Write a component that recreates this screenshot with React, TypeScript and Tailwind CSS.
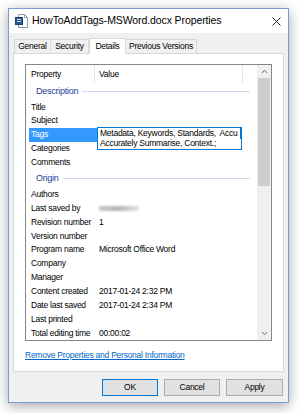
import { ChevronUp, ChevronDown } from 'lucide-react';

type Row = { label: string; value?: string; kind?: 'blur' | 'tags' };

const descriptionRows: Row[] = [
  { label: 'Title' },
  { label: 'Subject' },
  { label: 'Tags', kind: 'tags' },
  { label: 'Categories' },
  { label: 'Comments' },
];

const originRows: Row[] = [
  { label: 'Authors' },
  { label: 'Last saved by', kind: 'blur' },
  { label: 'Revision number', value: '1' },
  { label: 'Version number' },
  { label: 'Program name', value: 'Microsoft Office Word' },
  { label: 'Company' },
  { label: 'Manager' },
  { label: 'Content created', value: '2017-01-24 2:32 PM' },
  { label: 'Date last saved', value: '2017-01-24 2:34 PM' },
  { label: 'Last printed' },
  { label: 'Total editing time', value: '00:00:02' },
];

function DocIcon() {
  return (
    <svg width="13" height="14" viewBox="0 0 13 14">
      <path d="M3.5 0.5h6l3 3v10h-9z" fill="#ffffff" stroke="#8a9bb0" />
      <path d="M9.5 0.5v3h3" fill="none" stroke="#8a9bb0" />
      <rect x="0.5" y="3.5" width="7" height="7" fill="#2b5797" stroke="#1d3f72" />
      <rect x="2" y="5" width="4" height="1" fill="#c7d6ec" />
      <rect x="2" y="7" width="4" height="1" fill="#c7d6ec" />
    </svg>
  );
}

function GroupHeading({ title, h }: { title: string; h: string }) {
  return (
    <div className={`flex items-center ${h} pl-[10px] pr-[7px]`}>
      <span className="text-[#1c3f94] text-[9px] leading-none">{title}</span>
      <div className="flex-1 h-px bg-[#c8d8ef] ml-[4px]" />
    </div>
  );
}

function PropRow({ row }: { row: Row }) {
  const selected = row.kind === 'tags';
  return (
    <div className="relative flex items-center h-[13.9px] whitespace-nowrap">
      {selected ? (
        <div className="w-[71px] h-full flex items-center">
          <div className="ml-[3px] w-[68px] h-full bg-[#3399ff] text-white flex items-center pl-[2px]">{row.label}</div>
        </div>
      ) : (
        <div className="w-[71px] h-full flex items-center pl-[5px]">{row.label}</div>
      )}
      <div className="flex-1 pl-[2px]">
        {row.value}
        {row.kind === 'blur' && (
          <div className="w-[40px] h-[5px] bg-gradient-to-r from-[#c9c9c9] via-[#b4b4b4] to-[#e8e8e8] blur-[1px]" />
        )}
      </div>
      {selected && (
        <div className="absolute left-[71px] top-[-1px] w-[145px] h-[23px] bg-white border border-[#0078d7] leading-[10.5px] pl-[2px] text-black">
          <div className="whitespace-nowrap overflow-hidden">Metadata, Keywords, Standards,&nbsp; Accu</div>
          <div className="absolute right-[-1px] top-[-1px] w-[2px] h-[12px] bg-[#0078d7]" />
          <div className="whitespace-nowrap">Accurately Summarise, Context.;</div>
        </div>
      )}
    </div>
  );
}

export default function App() {
  return (
    <div
      className="w-[300px] h-[413px] bg-white pt-[8px] pl-[8px] overflow-hidden tracking-[-0.25px]"
      style={{ fontFamily: '"Liberation Sans", Arial, sans-serif' }}
    >
      <div className="w-[281px] h-[395px] border border-[#7b9cd3] bg-[#f0f0f0] shadow-[0_3px_12px_rgba(0,0,0,0.35)] flex flex-col">
        {/* Title bar */}
        <div className="h-[24px] bg-white flex items-center pl-[6px] pr-[7px] shrink-0">
          <DocIcon />
          <span className="ml-[4px] text-[10.5px] text-black tracking-[-0.1px]">HowToAddTags-MSWord.docx Properties</span>
          <div className="flex-1" />
          <svg width="9" height="9" viewBox="0 0 9 9">
            <path d="M0.5 0.5l8 8M8.5 0.5l-8 8" stroke="#222" strokeWidth="1" />
          </svg>
        </div>

        {/* Tabs */}
        <div className="flex items-end h-[20px] pl-[5px] text-[8.5px] text-black shrink-0">
          <div className="h-[14px] w-[37px] border border-b-0 border-[#d9d9d9] bg-[#f0f0f0] flex items-center justify-center">General</div>
          <div className="h-[14px] w-[38px] border border-b-0 border-l-0 border-[#d9d9d9] bg-[#f0f0f0] flex items-center justify-center">Security</div>
          <div className="h-[16px] w-[37px] border border-b-0 border-[#d9d9d9] bg-white flex items-center justify-center mb-[-1px] relative z-10">Details</div>
          <div className="h-[14px] w-[71px] border border-b-0 border-l-0 border-[#d9d9d9] bg-[#f0f0f0] flex items-center justify-center">Previous Versions</div>
        </div>

        {/* Panel */}
        <div className="ml-[4px] w-[271px] h-[319px] bg-white border border-[#d9d9d9] shrink-0 flex flex-col text-[8.5px] text-black">
          <div className="mt-[10px] ml-[11px] w-[247px] h-[277px] border border-[#828790] flex">
            <div className="flex-1 flex flex-col overflow-hidden">
              <div className="h-[18px] flex shrink-0">
                <div className="w-[69px] pl-[5px] flex items-center border-r border-[#e5e5e5]">Property</div>
                <div className="w-[148px] pl-[4px] flex items-center border-r border-[#e5e5e5]">Value</div>
              </div>
              <GroupHeading title="Description" h="h-[17px]" />
              {descriptionRows.map((r) => (
                <PropRow key={r.label} row={r} />
              ))}
              <GroupHeading title="Origin" h="h-[18px]" />
              {originRows.map((r) => (
                <PropRow key={r.label} row={r} />
              ))}
            </div>
            {/* Scrollbar */}
            <div className="w-[14px] bg-[#f0f0f0] flex flex-col items-center shrink-0">
              <div className="h-[13px] flex items-center justify-center">
                <ChevronUp size={9} strokeWidth={2.5} className="text-[#606060]" />
              </div>
              <div className="w-[12px] h-[108px] bg-[#cdcdcd]" />
              <div className="flex-1" />
              <div className="h-[13px] flex items-center justify-center">
                <ChevronDown size={9} strokeWidth={2.5} className="text-[#606060]" />
              </div>
            </div>
          </div>
          <div className="mt-[8px] ml-[11px]">
            <span className="text-[#0066cc] underline">Remove Properties and Personal Information</span>
          </div>
        </div>

        {/* Buttons */}
        <div className="flex justify-end gap-[6px] pr-[5px] mt-[7px] text-[8.5px] text-black">
          <button className="w-[56px] h-[17px] bg-[#e1e1e1] border border-[#0078d7]">OK</button>
          <button className="w-[56px] h-[17px] bg-[#e1e1e1] border border-[#adadad]">Cancel</button>
          <button className="w-[57px] h-[17px] bg-[#e1e1e1] border border-[#adadad]">Apply</button>
        </div>
      </div>
    </div>
  );
}
